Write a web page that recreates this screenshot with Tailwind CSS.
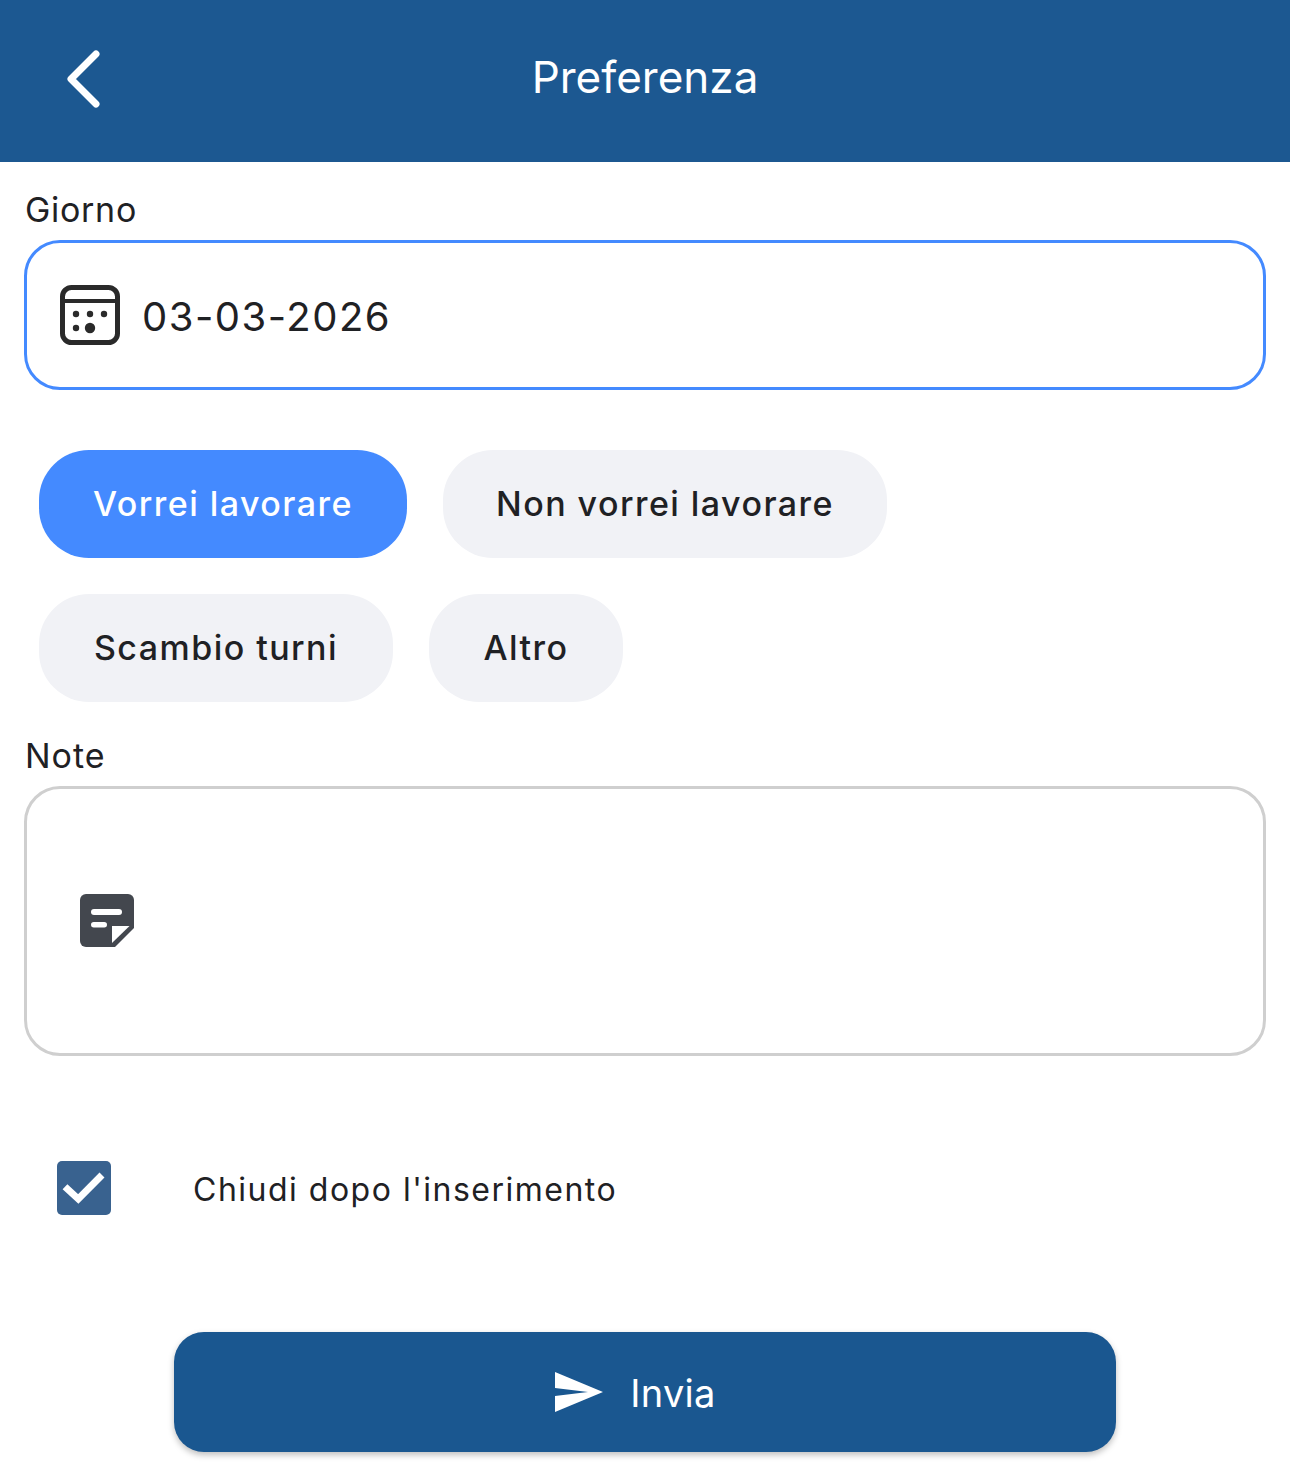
<!DOCTYPE html>
<html lang="it">
<head>
    <meta charset="UTF-8">
    <meta name="viewport" content="width=device-width, initial-scale=1.0">
    <script src="https://cdn.jsdelivr.net/npm/@tailwindcss/browser@4"></script>
    <title>Preferenza</title>
</head>
<body class="bg-white font-['Inter',sans-serif] text-[#1f2124]">
    <div class="w-[1290px] h-[1484px] flex flex-col overflow-hidden">
        <!-- header -->
        <header class="h-[162px] bg-[#1c5891] flex items-center text-white shrink-0 pb-[8px]">
            <div class="w-[168px] pl-[61px] pt-1 flex items-center">
                <svg width="48" height="64" viewBox="0 0 48 64" fill="none" stroke="white" stroke-width="7" stroke-linecap="round" stroke-linejoin="round"><path d="M35 7 L10 32 L35 57"/></svg>
            </div>
            <h1 class="flex-1 text-center text-[44px] leading-none pr-[168px]">Preferenza</h1>
        </header>

        <main class="px-6 flex flex-col">
            <!-- giorno -->
            <label class="mt-[28px] pl-px text-[34px] leading-[40px] tracking-[0.7px]">Giorno</label>
            <div class="mt-[10px] h-[150px] border-[3px] border-[#448aff] rounded-[36px] flex items-center pl-[32px]">
                <svg width="62" height="62" viewBox="0 0 62 62" fill="none" class="shrink-0">
                    <rect x="3.500" y="3.500" width="55" height="55" rx="9" stroke="#2a2a2a" stroke-width="5"/>
                    <path d="M3 17 H59" stroke="#2a2a2a" stroke-width="4"/>
                    <circle cx="17" cy="30" r="3.200" fill="#2a2a2a"/>
                    <circle cx="31" cy="30" r="3.200" fill="#2a2a2a"/>
                    <circle cx="45" cy="30" r="3.200" fill="#2a2a2a"/>
                    <circle cx="17" cy="44" r="3.200" fill="#2a2a2a"/>
                    <circle cx="31" cy="44" r="5.200" fill="#2a2a2a"/>
                </svg>
                <span class="ml-[21px] pt-1 text-[40px] leading-none tracking-[1.5px]">03-03-2026</span>
            </div>

            <!-- tipo -->
            <div class="mt-[60px] pl-[15px] flex flex-col gap-9 text-[34px] font-medium tracking-[1.45px]">
                <div class="flex gap-9">
                    <div class="h-[108px] w-[368px] pb-0.5 rounded-[50px] bg-[#448aff] text-white flex items-center justify-center">Vorrei lavorare</div>
                    <div class="h-[108px] w-[444px] pb-0.5 rounded-[50px] bg-[#f1f2f6] flex items-center justify-center">Non vorrei lavorare</div>
                </div>
                <div class="flex gap-9">
                    <div class="h-[108px] w-[354px] pb-0.5 rounded-[50px] bg-[#f1f2f6] flex items-center justify-center">Scambio turni</div>
                    <div class="h-[108px] w-[194px] pb-0.5 rounded-[50px] bg-[#f1f2f6] flex items-center justify-center">Altro</div>
                </div>
            </div>

            <!-- note -->
            <label class="mt-[34px] pl-px text-[34px] leading-[40px] tracking-[1px]">Note</label>
            <div class="mt-[10px] h-[270px] border-[3px] border-[#cfcfcf] rounded-[36px] flex items-center pl-[52px]">
                <svg width="56" height="56" viewBox="0 0 56 56" class="shrink-0">
                    <path fill="#43474e" d="M7 1 H49 A6 6 0 0 1 55 7 V35 L36 54 H7 A6 6 0 0 1 1 48 V7 A6 6 0 0 1 7 1 Z"/>
                    <path d="M33 33 H50.500 L33 50 Z" fill="white"/>
                    <rect x="12" y="16" width="31" height="6" rx="3" fill="white"/>
                    <rect x="12" y="29" width="16" height="5.500" rx="2.750" fill="white"/>
                </svg>
            </div>

            <!-- chiudi -->
            <div class="mt-[105px] pl-[33px] flex items-center">
                <div class="w-[54px] h-[54px] rounded-[5px] bg-[#39628f] flex items-center justify-center">
                    <svg width="54" height="54" viewBox="0 0 54 54" fill="none" stroke="white" stroke-width="7"><path d="M8 25.700 L21.300 38 L45 14"/></svg>
                </div>
                <span class="ml-[82px] pt-1 text-[32px] leading-none tracking-[1.5px]">Chiudi dopo l'inserimento</span>
            </div>

            <!-- invia -->
            <button class="mt-[117px] mx-auto w-[942px] h-[120px] pr-5 rounded-[30px] bg-[#1a5790] text-white flex items-center justify-center shadow-[0_3px_6px_rgba(0,0,0,0.25)]">
                <svg width="50" height="42" viewBox="0 0 50 42" fill="white"><path d="M1 1 L49 21 L1 41 V25 L34 21 L1 17 Z"/></svg>
                <span class="ml-[26px] pt-0.5 text-[38px] leading-none tracking-[0.3px]">Invia</span>
            </button>
        </main>
    </div>
</body>
</html>
